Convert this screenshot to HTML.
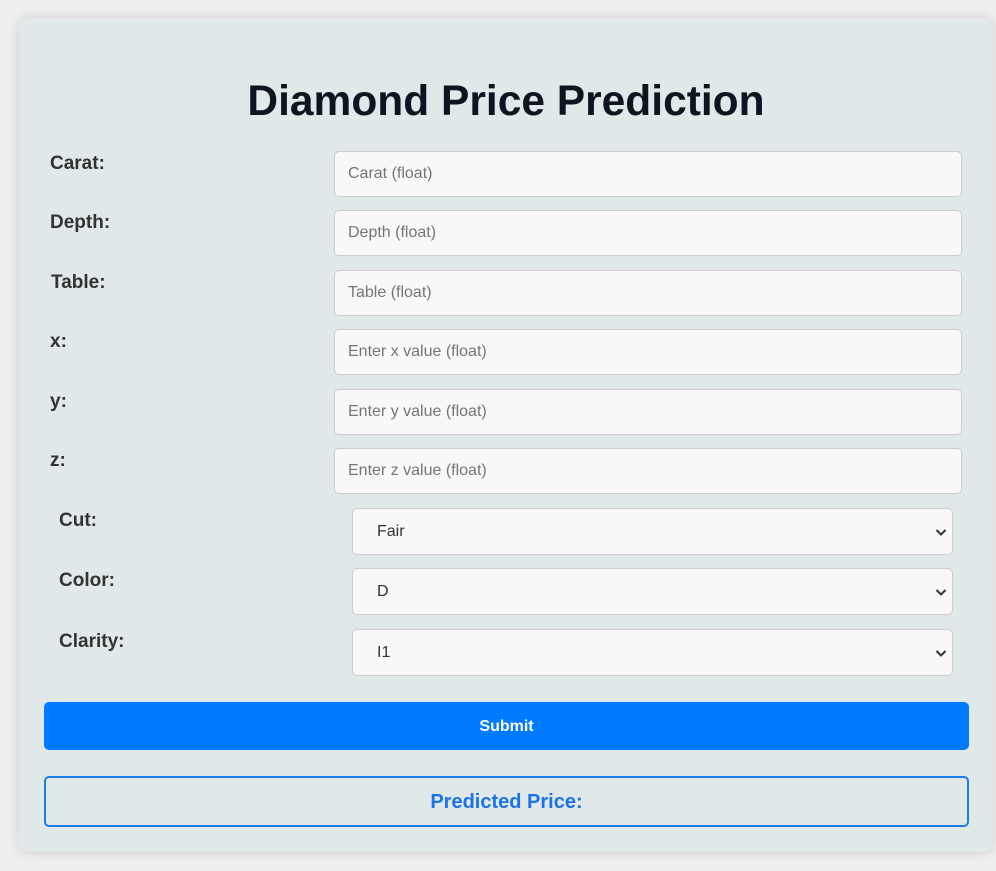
<!DOCTYPE html>
<html><head><style>
body{margin:0;width:996px;height:871px;background:#efefef;font-family:"Liberation Sans",Arial,sans-serif;position:relative;overflow:hidden}
.card{position:absolute;left:19px;top:18px;width:974px;height:834px;background:#e0e8e9;border-radius:10px;box-shadow:0 0 12px rgba(0,0,0,.15)}
h1{position:absolute;left:0;width:1012px;top:75px;margin:0;text-align:center;font-size:42.5px;font-weight:bold;color:#0d1520;line-height:54px}
.lb{position:absolute;font-size:19px;font-weight:bold;color:#333;line-height:22px;margin-top:2px}
.in{position:absolute;left:334px;width:628px;height:46px;box-sizing:border-box;border:1px solid #ccc;border-radius:5px;background:#f8f8f8;font-size:16px;color:#757575;padding-left:13px;line-height:44px}
.sel{position:absolute;left:352px;width:601px;height:47px;box-sizing:border-box;border:1px solid #ccc;border-radius:5px;background:#f8f8f8;font-size:16px;color:#333;padding-left:24px;line-height:45px}
.sel svg{position:absolute;right:5px;top:18px}
.btn{position:absolute;left:44px;top:702px;width:925px;height:48px;background:#007bff;border-radius:5px;color:#fff;font-weight:bold;font-size:16px;text-align:center;line-height:50px}
.res{position:absolute;left:44px;top:776px;width:925px;height:51px;box-sizing:border-box;border:2px solid #1a7de8;border-radius:5px;color:#1a73e8;font-weight:bold;font-size:20px;text-align:center;line-height:48px}
</style></head><body>
<div class="card"></div>
<h1>Diamond Price Prediction</h1>
<div class="lb" style="left:50px;top:151px">Carat:</div>
<div class="lb" style="left:50px;top:210px">Depth:</div>
<div class="lb" style="left:51px;top:270px">Table:</div>
<div class="lb" style="left:50px;top:329px">x:</div>
<div class="lb" style="left:50px;top:389px">y:</div>
<div class="lb" style="left:50px;top:448px">z:</div>
<div class="in" style="top:151px">Carat (float)</div>
<div class="in" style="top:210px">Depth (float)</div>
<div class="in" style="top:270px">Table (float)</div>
<div class="in" style="top:329px">Enter x value (float)</div>
<div class="in" style="top:389px">Enter y value (float)</div>
<div class="in" style="top:448px">Enter z value (float)</div>
<div class="lb" style="left:59px;top:508px">Cut:</div>
<div class="lb" style="left:59px;top:568px">Color:</div>
<div class="lb" style="left:59px;top:629px">Clarity:</div>
<div class="sel" style="top:508px">Fair<svg width="12" height="10" viewBox="0 0 12 10"><path d="M1.5 3l4.5 4.5 4.5-4.5" fill="none" stroke="#333" stroke-width="2"/></svg></div>
<div class="sel" style="top:568px">D<svg width="12" height="10" viewBox="0 0 12 10"><path d="M1.5 3l4.5 4.5 4.5-4.5" fill="none" stroke="#333" stroke-width="2"/></svg></div>
<div class="sel" style="top:629px">I1<svg width="12" height="10" viewBox="0 0 12 10"><path d="M1.5 3l4.5 4.5 4.5-4.5" fill="none" stroke="#333" stroke-width="2"/></svg></div>
<div class="btn">Submit</div>
<div class="res">Predicted Price:</div>
</body></html>
